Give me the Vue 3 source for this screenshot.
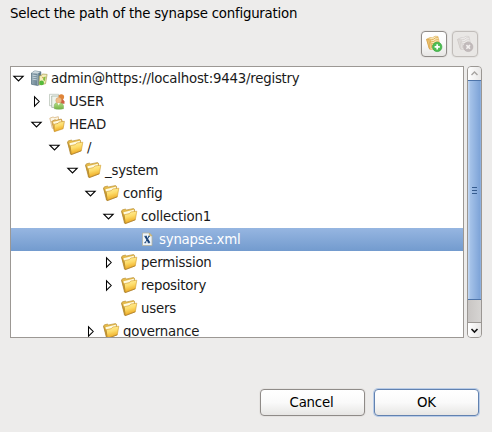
<script setup>
const rows = [
  { label: 'admin@https://localhost:9443/registry', depth: 0, state: 'open', icon: 'server' },
  { label: 'USER', depth: 1, state: 'closed', icon: 'user' },
  { label: 'HEAD', depth: 1, state: 'open', icon: 'head' },
  { label: '/', depth: 2, state: 'open', icon: 'folder' },
  { label: '_system', depth: 3, state: 'open', icon: 'folder' },
  { label: 'config', depth: 4, state: 'open', icon: 'folder' },
  { label: 'collection1', depth: 5, state: 'open', icon: 'folder' },
  { label: 'synapse.xml', depth: 6, state: 'leaf', icon: 'file', selected: true },
  { label: 'permission', depth: 5, state: 'closed', icon: 'folder' },
  { label: 'repository', depth: 5, state: 'closed', icon: 'folder' },
  { label: 'users', depth: 5, state: 'leaf', icon: 'folder' },
  { label: 'governance', depth: 4, state: 'closed', icon: 'folder' },
]
</script>

<template>
  <main class="dialog">
    <svg class="defs" width="0" height="0">
      <defs>
        <linearGradient id="gold" x1="0" y1="0" x2="0.25" y2="1">
          <stop offset="0" stop-color="#fff3a8" /><stop offset="0.5" stop-color="#fddb68" /><stop offset="1" stop-color="#eba51c" />
        </linearGradient>
        <linearGradient id="steel" x1="0" x2="1">
          <stop offset="0" stop-color="#93a8b4" /><stop offset="1" stop-color="#526e7e" />
        </linearGradient>
        <linearGradient id="green" x1="0" y1="0" x2="0" y2="1">
          <stop offset="0" stop-color="#b5dc83" /><stop offset="1" stop-color="#74b345" />
        </linearGradient>
      </defs>
    </svg>
    <h1 class="title">Select the path of the synapse configuration</h1>
    <div class="toolbar">
      <button class="tool" aria-label="Add">
        <svg width="18" height="18" viewBox="0 0 18 18">
          <path d="M1.6 4.3 5 2.5l2.6.2L10 1.2l3 .3 2 9.5-3 3.2-7.2.3z" fill="#fbecc0" stroke="#dfb560" stroke-width=".7" />
          <path d="m5.3 5 3-.6 2-1.5 2.7-.2M5.6 7l3.2-.6 2-1.5 2.7-.2M6 9l3-.6 2-1.5 2.7-.2M6.4 11l2-.4M4.8 3.3l2 10.2" fill="none" stroke="#d9a03b" stroke-width=".8" />
          <path d="M1.6 4.3 4 4l1.3 9.7-1.2-.3z" fill="#edc46e" stroke="#cf9639" stroke-width=".6" />
          <circle cx="12.2" cy="11.9" r="4.7" fill="#4fbe52" stroke="#36a440" stroke-width=".7" />
          <path d="M12.2 9.3v5.2M9.6 11.9h5.2" stroke="#fff" stroke-width="1.7" />
        </svg>
      </button>
      <button class="tool off" aria-label="Delete" disabled>
        <svg width="18" height="18" viewBox="0 0 18 18">
          <path d="M1.6 4.3 5 2.5l2.6.2L10 1.2l3 .3 2 9.5-3 3.2-7.2.3z" fill="#eeeceb" stroke="#d1cdcb" stroke-width=".7" />
          <path d="m5.3 5 3-.6 2-1.5 2.7-.2M5.6 7l3.2-.6 2-1.5 2.7-.2M6 9l3-.6 2-1.5 2.7-.2M6.4 11l2-.4M4.8 3.3l2 10.2" fill="none" stroke="#d0cbc9" stroke-width=".8" />
          <path d="M1.6 4.3 4 4l1.3 9.7-1.2-.3z" fill="#dedad8" stroke="#cbc6c3" stroke-width=".6" />
          <circle cx="12.2" cy="11.9" r="4.7" fill="#c1babb" stroke="#b7afaf" stroke-width=".6" />
          <path d="m10.4 10.1 3.6 3.6m0-3.6-3.6 3.6" stroke="#f3f0ef" stroke-width="1.6" />
        </svg>
      </button>
    </div>

    <div class="browser">
      <div class="tree">
        <div v-for="row in rows" :key="row.label" class="row" :class="{ selected: row.selected }" :style="{ paddingLeft: row.depth * 18 + 'px' }">
          <svg class="arrow" width="16" height="16" viewBox="0 0 16 16">
            <path v-if="row.state === 'open'" d="M2.8 5.2h9.4L7.5 9.9z" fill="#fff" stroke="#000" stroke-width="1.05" />
            <path v-else-if="row.state === 'closed'" d="M5.5 2.8v9.4L10.2 7.5z" fill="#fff" stroke="#000" stroke-width="1.05" />
          </svg>
          <svg class="icon" width="17" height="17" viewBox="0 0 17 17">
            <g v-if="row.icon === 'folder'">
              <path d="M.5 3.1 1.4 1.8l3-.7 1.2.8 7-1.4.9.8.3 6-9.8 7z" fill="#e5ba4b" stroke="#b58c35" stroke-width=".6" />
              <path d="m2.5 4.2 10.2-2.5.5 3-10 4z" fill="#fffbe2" />
              <path d="m3.2 6.7 5.2-1.1L9.8 4l6-.8-1.5 8.6-10.2 3.8z" fill="url(#gold)" stroke="#d29c2c" stroke-width=".6" />
              <path d="m.6 3.2 2.8 11.8.8.5-1.2-8.8" fill="#d4a336" stroke="#a17a29" stroke-width=".5" />
              <path d="m4.3 15.6 10-3.8" stroke="#a47424" stroke-width=".7" />
            </g>
            <g v-else-if="row.icon === 'server'">
              <path d="m.5 3 3.3-2L9.8 1.8v11.7l-3 2-6.3-1.2z" fill="url(#steel)" stroke="#506b7a" stroke-width=".7" />
              <path d="m.5 3 6.2.7 3-1.9L3.8 1z" fill="#cdd9de" />
              <path d="M1.5 5.2l4.3.6M1.5 7.2l4.3.6M1.5 9.2l4.3.6" stroke="#dce8ed" stroke-width=".7" />
              <path d="M6.8 3.8v11.5" stroke="#b7c8d0" stroke-width=".7" />
              <path d="m8.4 5.9 2.2-.5.8-1.4 4.7.4-1.6 9.3-6.5 1.2z" fill="#f4edbb" stroke="#a99c4f" stroke-width=".7" />
              <path d="m12.2 7.2 2.5-.8-.9 4.8-1.6-1.1z" fill="#86bd40" />
              <path d="m11.2 6.8 1 1.6" stroke="#d69a3d" stroke-width=".9" />
              <circle cx="10.6" cy="12.9" r="2.4" fill="#55ba3b" />
            </g>
            <g v-else-if="row.icon === 'user'">
              <path d="M.5 1.3h9v11.4h-9z" fill="#f9fbf8" stroke="#b4beb3" stroke-width=".7" />
              <path d="M2.7 3h9v11.4h-9z" fill="#eef3eb" stroke="#99a998" stroke-width=".7" />
              <path d="M10.5 6h3.2l1.8 2.4v2.4H11z" fill="#cd6041" />
              <circle cx="12.3" cy="4" r="2.8" fill="#df8438" />
              <path d="M5.3 15.7V12q.4-2.1 2.6-2.3h3.2q2.9.3 3.4 3.1v2.9q-4.6 1.2-9.2 0z" fill="url(#green)" stroke="#78ab58" stroke-width=".5" />
              <circle cx="9.6" cy="7.4" r="2.8" fill="#efbd87" stroke="#cf9f6b" stroke-width=".5" />
              <path d="m8.5 10 1.2 2.4 1.2-2.4z" fill="#f5faf0" />
            </g>
            <g v-else-if="row.icon === 'head'">
              <path d="M.8 2.2 4 1l1.7.6L9.3.7l1 8.2-7 3.5z" fill="#fcf6e6" stroke="#d4ac70" stroke-width=".7" />
              <path d="m2.7 5.4 3.4-1.7 1 .6 5.2-1.3.9 2v7l-7.9 3z" fill="#e4b653" stroke="#ba8a39" stroke-width=".7" />
              <path d="m4 6 7.8-2.1.6 2-7 3z" fill="#fff8dc" />
              <path d="m5.3 8.2 3.7-.8 1.1-1.3 5.3-.8-1.3 7.5-8.8 2.9z" fill="url(#gold)" stroke="#c58d29" stroke-width=".6" />
            </g>
            <g v-else>
              <path d="M3.5 2h6.8l2.7 2.8v9.7H3.5z" fill="#edf4fa" stroke="#b4b3a0" stroke-width=".8" />
              <path d="M10.3 2v2.8H13z" fill="#e6c877" stroke="#c0a763" stroke-width=".6" />
              <path d="m6.4 5.3 3.9 6.4" stroke="#173d70" stroke-width="2" />
              <path d="m10.1 5.3-3.9 6.4M5.4 5.3H8M9 5.3h1.8M5.4 11.7h1.8M8.8 11.7h2.3" stroke="#254f80" stroke-width="1" />
            </g>
          </svg>
          <span class="label">{{ row.label }}</span>
        </div>
      </div>
      <div class="scrollbar">
        <div class="step up"><svg width="11" height="11" viewBox="0 0 11 11"><path d="m2.5 7 3-3 3 3" fill="none" stroke="#a7a4a1" stroke-width="1.4" /></svg></div>
        <div class="thumb"><i /><i /><i /></div>
        <div class="step down"><svg width="11" height="11" viewBox="0 0 11 11"><path d="m2.5 4 3 3 3-3" fill="none" stroke="#111" stroke-width="1.6" /></svg></div>
      </div>
    </div>

    <footer class="actions">
      <button class="action">Cancel</button>
      <button class="action primary">OK</button>
    </footer>
  </main>
</template>

<style>
body { margin: 0; background: #edeceb; }
</style>

<style scoped>
* { box-sizing: border-box; }
.dialog { width: 492px; height: 432px; padding: 5px 10px 0; overflow: hidden; display: flex; flex-direction: column; background: #edeceb; color: #1a1a1a; font: 13.33px "DejaVu Sans", sans-serif; letter-spacing: -0.22px; }
.defs { position: absolute; }
.title { margin: 0; height: 18px; line-height: 18px; font-size: inherit; font-weight: normal; color: #000; white-space: nowrap; }
.toolbar { height: 27px; margin: 8px 4px 0 0; display: flex; justify-content: flex-end; gap: 5px; }
button { font: inherit; letter-spacing: inherit; color: #000; padding: 0; border: 1px solid #8f8b88; border-radius: 4px; background: linear-gradient(#fff, #fafafa 50%, #e7e6e4); box-shadow: 0 0 0 1px #e5e3e1; }
.tool { width: 26px; height: 26px; display: grid; place-items: center; }
.tool.off { border-color: #c1bdba; background: #e9e7e5; }
.browser { height: 272px; margin-top: 8px; display: flex; gap: 3px; }
.tree { width: 454px; height: 272px; overflow: hidden; border: 1px solid #9c9894; background: #fff; }
.row { height: 23px; display: flex; align-items: center; white-space: nowrap; }
.arrow { flex: none; }
.icon { flex: none; margin-left: 4px; }
.label { margin-left: 3px; line-height: 23px; }
.selected { background: linear-gradient(#96b6e1, #739bce); color: #fff; }
.scrollbar { width: 15px; height: 272px; display: flex; flex-direction: column; border: 1px solid #9b9793; border-radius: 4px; background: linear-gradient(90deg, #c9c6c4, #d6d4d2); overflow: hidden; }
.step { height: 13px; flex: none; display: grid; place-items: center; background: linear-gradient(90deg, #fff, #e8e7e6); }
.down { height: 15px; margin-top: auto; border-top: 1px solid #9b9793; }
.thumb { height: 220px; margin: 0 -1px; border: 1px solid #4d74aa; background: linear-gradient(90deg, #bfd5f1 0 1px, #a6c3e9 2px, #7ea4d8 12px, #9dbce4 13px); display: flex; flex-direction: column; align-items: center; justify-content: center; gap: 2px; }
.thumb i { width: 5px; height: 1px; background: #355b8e; }
.actions { height: 28px; margin: 51px 3px 0 0; display: flex; justify-content: flex-end; gap: 9px; }
.action { width: 105px; height: 27px; line-height: 24px; padding-right: 2px; }
.primary { padding-right: 0; border-color: #6282b0; box-shadow: 0 0 0 1px #b9cce7; }
</style>
